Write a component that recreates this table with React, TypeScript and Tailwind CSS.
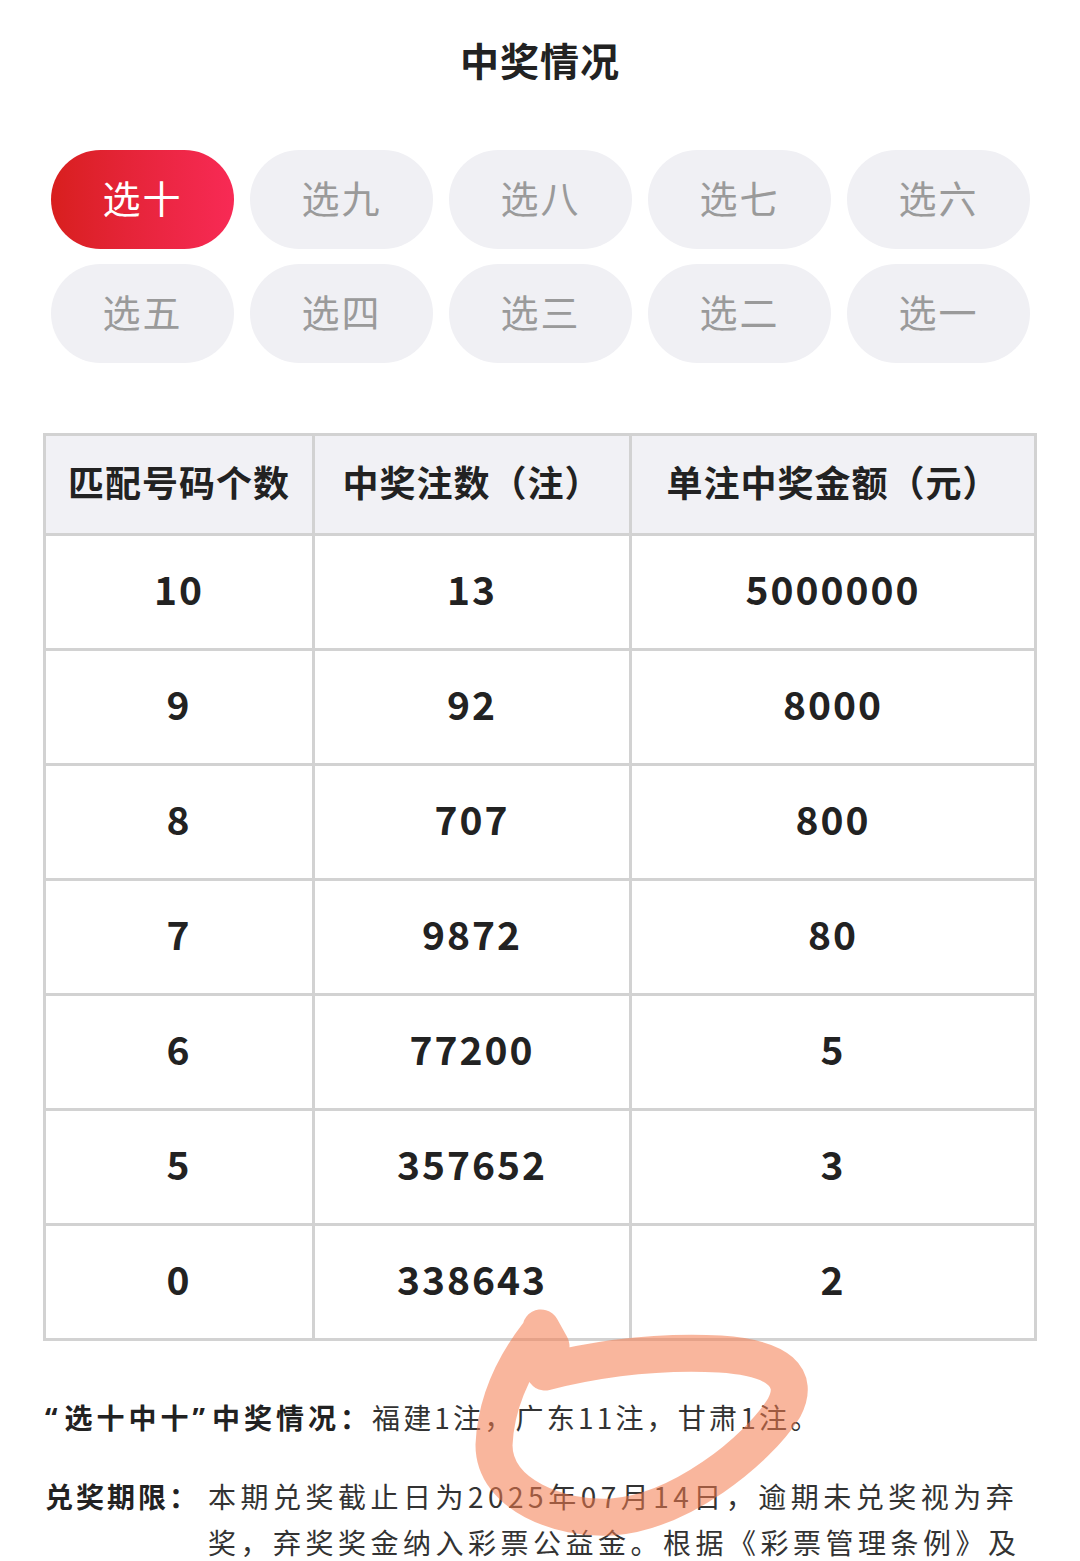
import React from "react";

const tabs = ["选十", "选九", "选八", "选七", "选六", "选五", "选四", "选三", "选二", "选一"];
const rows: [string, string, string][] = [
  ["10", "13", "5000000"],
  ["9", "92", "8000"],
  ["8", "707", "800"],
  ["7", "9872", "80"],
  ["6", "77200", "5"],
  ["5", "357652", "3"],
  ["0", "338643", "2"],
];

export default function App() {
  return (
    <div className="relative w-[1080px] h-[1561px] overflow-hidden bg-white font-['Noto_Sans_CJK_SC',sans-serif] text-[#222]">
      <div className="h-[124px] pb-[6px] flex items-center justify-center">
        <h1 className="text-[39px] font-bold tracking-[1px] text-[#222]">中奖情况</h1>
      </div>

      <div className="mt-[26px] pl-[51px] pr-[50px] grid grid-cols-5 gap-x-[16px] gap-y-[15px]">
        {tabs.map((t, i) => (
          <div
            key={t}
            className={
              i === 0
                ? "h-[99px] pb-[7px] rounded-full flex items-center justify-center text-[38px] tracking-[2px] text-white bg-gradient-to-r from-[#d81f1d] to-[#f82a55]"
                : "h-[99px] pb-[7px] rounded-full flex items-center justify-center text-[38px] tracking-[2px] text-[#9a9a9a] bg-[#f0f0f4]"
            }
          >
            {t}
          </div>
        ))}
      </div>

      <div className="mt-[70px] pl-[43px] pr-[43px]">
        <table className="w-[994px] table-fixed border-collapse border-[3px] border-[#d2d2d2]">
          <thead>
            <tr className="h-[100px] bg-[#f1f1f5]">
              <th className="w-[269px] pb-[8px] border-[3px] border-[#d2d2d2] text-[36px] font-bold tracking-[1px] text-[#222]">匹配号码个数</th>
              <th className="w-[317px] pb-[8px] border-[3px] border-[#d2d2d2] text-[36px] font-bold tracking-[1px] text-[#222]">中奖注数（注）</th>
              <th className="pb-[8px] border-[3px] border-[#d2d2d2] text-[36px] font-bold tracking-[1px] text-[#222]">单注中奖金额（元）</th>
            </tr>
          </thead>
          <tbody>
            {rows.map((r) => (
              <tr key={r[0]} className="h-[115px]">
                {r.map((c, j) => (
                  <td key={j} className="pb-[8px] border-[3px] border-[#d2d2d2] text-center text-[39px] font-bold tracking-[2px] text-[#222]">
                    {c}
                  </td>
                ))}
              </tr>
            ))}
          </tbody>
        </table>
      </div>

      <div className="mt-[53px] pl-[45px] pr-[43px] text-[28px] leading-[46px]">
        <p>
          <span className="font-bold text-[#222] tracking-[4px]">
            <span className="font-['Noto_Sans',sans-serif] tracking-[7px]">“</span>选十中十<span className="font-['Noto_Sans',sans-serif] tracking-[7px]">”</span>中奖情况：
          </span>
          <span className="text-[#333] tracking-[3.2px]">福建1注，广东11注，甘肃1注。</span>
        </p>
        <div className="mt-[32px] flex">
          <div className="w-[163px] shrink-0 font-bold text-[#222] tracking-[3px]">兑奖期限：</div>
          <p className="flex-1 text-[#333] tracking-[4.5px]">
            本期兑奖截止日为2025年07月14日，逾期未兑奖视为弃奖，弃奖奖金纳入彩票公益金。根据《彩票管理条例》及相关规定，中奖者应当自开奖之日起60个自然日内兑奖。
          </p>
        </div>
      </div>

      <svg className="pointer-events-none absolute left-0 top-0" width="1080" height="1561" viewBox="0 0 1080 1561">
        <path
          d="M 541 1328 L 551 1346 M 538 1334 C 518 1360, 496 1398, 494 1445 C 494 1495, 560 1520, 612 1517 C 680 1512, 756 1452, 784 1408 C 800 1378, 780 1358, 720 1354 C 660 1351, 600 1358, 545 1372"
          fill="none"
          stroke="#f47a4c"
          strokeOpacity="0.55"
          strokeWidth="37"
          strokeLinecap="round"
          strokeLinejoin="round"
        />
      </svg>
    </div>
  );
}
